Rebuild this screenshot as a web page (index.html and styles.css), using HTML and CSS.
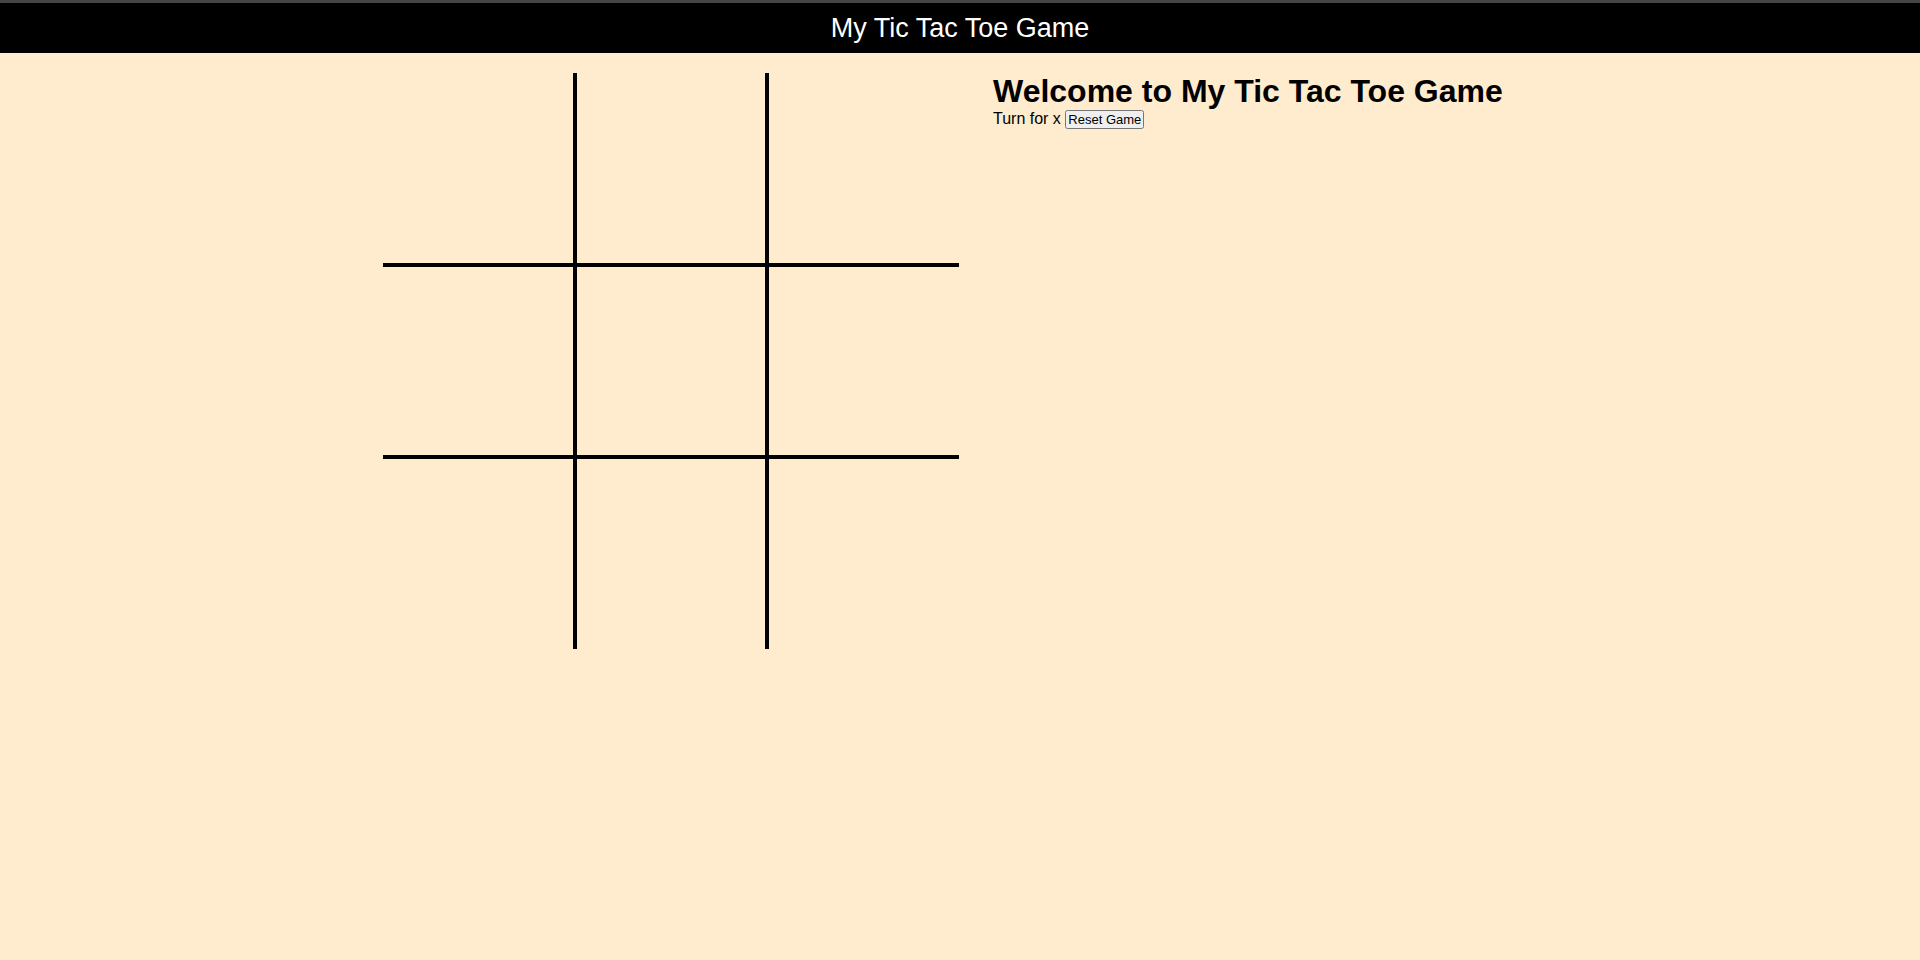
FILE: index.html
```html
<!DOCTYPE html>
<html lang="en">
<head>
<meta charset="utf-8">
<title>My Tic Tac Toe Game</title>
<link rel="stylesheet" href="styles.css">
</head>
<body>
<header class="topbar">My Tic Tac Toe Game</header>
<main class="layout">
  <section class="board-col">
    <div class="board">
      <div class="cell c-top c-left"></div>
      <div class="cell c-top c-mid"></div>
      <div class="cell c-top c-right"></div>
      <div class="cell c-row c-left"></div>
      <div class="cell c-row c-mid"></div>
      <div class="cell c-row c-right"></div>
      <div class="cell c-bottom c-left"></div>
      <div class="cell c-bottom c-mid"></div>
      <div class="cell c-bottom c-right"></div>
    </div>
  </section>
  <section class="info-col">
    <h1 class="welcome">Welcome to My Tic Tac Toe Game</h1>
    <div class="status">Turn for x <button class="reset-btn" type="button">Reset Game</button></div>
  </section>
</main>
</body>
</html>
```
FILE: styles.css
```css
html, body {
  margin: 0;
  padding: 0;
}
body {
  background: #ffebcd;
  font-family: "Liberation Sans", Arial, sans-serif;
  color: #000;
  min-height: 960px;
}
.topbar {
  box-sizing: border-box;
  height: 53px;
  border-top: 3px solid #454545;
  background: #000;
  color: #fff;
  font-size: 27px;
  line-height: 30px;
  padding-top: 10px;
  text-align: center;
}
.layout {
  display: flex;
  padding-top: 20px;
}
.board-col {
  width: 960px;
  display: flex;
  justify-content: flex-end;
  padding-right: 1px;
  box-sizing: border-box;
}
.board {
  display: grid;
  grid-template-columns: repeat(3, 192px);
  grid-template-rows: repeat(3, 192px);
}
.cell {
  box-sizing: border-box;
}
.c-left { border-right: 2px solid #000; }
.c-mid { border-left: 2px solid #000; border-right: 2px solid #000; }
.c-right { border-left: 2px solid #000; }
.c-top { border-bottom: 2px solid #000; }
.c-row { border-top: 2px solid #000; border-bottom: 2px solid #000; }
.c-bottom { border-top: 2px solid #000; }
.info-col {
  padding-left: 33px;
}
.welcome {
  margin: 0;
  font-size: 32px;
  font-weight: bold;
  line-height: normal;
}
.status {
  font-size: 16px;
  line-height: normal;
}
.reset-btn {
  font-family: "Liberation Sans", Arial, sans-serif;
  font-size: 13px;
  padding: 0 1px;
  margin: 0;
}
```
